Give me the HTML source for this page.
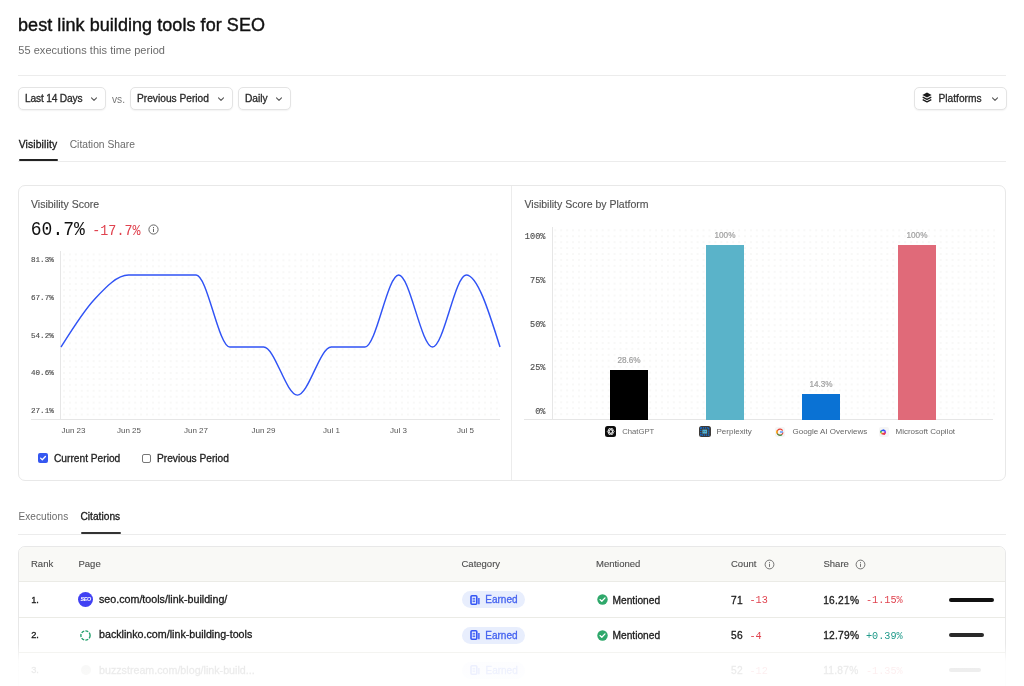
<!DOCTYPE html>
<html><head><meta charset="utf-8">
<style>
*{margin:0;padding:0;box-sizing:border-box;}
html,body{width:1024px;height:686px;overflow:hidden;background:#fff;}
body{position:relative;will-change:transform;font-family:"Liberation Sans",sans-serif;color:#1a1a1a;}
.a{position:absolute;white-space:nowrap;line-height:1;}
.mono{font-family:"Liberation Mono",monospace;}
.md{-webkit-text-stroke:0.3px currentColor;}
.btn{position:absolute;top:87px;height:23px;border:1px solid #e4e4e4;border-radius:5px;background:#fff;box-shadow:0 1px 1.5px rgba(0,0,0,0.05);}
.btn span{position:absolute;top:6.0px;font-size:10.2px;-webkit-text-stroke:0.3px currentColor;color:#2a2a2a;line-height:1;white-space:nowrap;}
.chev{position:absolute;top:8.6px;margin-left:-0.7px;}
.hl{position:absolute;height:1px;background:#ececec;}
.dots{position:absolute;background-image:radial-gradient(circle at 1px 1px,#e9e9e6 0.7px,rgba(255,255,255,0) 1px);background-size:6px 6px;}
.yl{position:absolute;font-family:"Liberation Mono",monospace;font-size:7.6px;margin-top:1.2px;color:#505050;-webkit-text-stroke:0.15px currentColor;line-height:1;white-space:nowrap;}
.xl{position:absolute;font-size:8px;color:#555;margin-top:0.2px;line-height:1;white-space:nowrap;}
.bl{position:absolute;font-size:8.2px;color:#a0a0a0;line-height:1;text-align:center;width:38px;-webkit-text-stroke:0.2px currentColor;margin-top:0.3px;}
.th{position:absolute;top:559.0px;font-size:9.5px;color:#4e4e4e;-webkit-text-stroke:0.12px currentColor;line-height:1;white-space:nowrap;}
.cell{position:absolute;font-size:9.8px;line-height:1;color:#1a1a1a;white-space:nowrap;}
.pill{position:absolute;left:462px;width:63px;height:17px;border-radius:9px;background:#e8eefd;}
</style></head><body>

<!-- Title -->
<div class="a" style="left:18px;top:16.3px;font-size:18px;color:#111;letter-spacing:0.06px;-webkit-text-stroke:0.4px currentColor;">best link building tools for SEO</div>
<div class="a" style="left:18.3px;top:44.7px;font-size:11px;color:#6b6b6b;letter-spacing:0.04px;">55 executions this time period</div>
<div class="hl" style="left:18px;top:75px;width:988px;"></div>

<!-- Filter buttons -->
<svg width="0" height="0" style="position:absolute"><defs><path id="chv" d="M0.5 0.8L3 3.3 5.5 0.8" fill="none" stroke="#555" stroke-width="1.1" stroke-linecap="round" stroke-linejoin="round"/></defs></svg>
<div class="btn" style="left:18px;width:88px;"><span style="left:6px;letter-spacing:-0.18px;">Last 14 Days</span><svg class="chev" style="left:72.8px" width="6" height="5"><use href="#chv"/></svg></div>
<div class="a" style="left:112px;top:94.6px;font-size:10.2px;color:#777;">vs.</div>
<div class="btn" style="left:130px;width:103px;"><span style="left:6px;">Previous Period</span><svg class="chev" style="left:87.5px" width="6" height="5"><use href="#chv"/></svg></div>
<div class="btn" style="left:238px;width:53px;"><span style="left:6px;">Daily</span><svg class="chev" style="left:38px" width="6" height="5"><use href="#chv"/></svg></div>
<div class="btn" style="left:914px;width:93px;"><span style="left:23.5px;">Platforms</span><svg class="chev" style="left:77.5px" width="6" height="5"><use href="#chv"/></svg>
  <svg style="position:absolute;left:6.5px;top:4.2px" width="10" height="11" viewBox="0 0 10 11" preserveAspectRatio="none" style=""><path d="M5 0.4L9.6 2.9 5 5.4 0.4 2.9z" fill="#1a1a1a"/><path d="M0.7 5.1L5 7.4 9.3 5.1" fill="none" stroke="#1a1a1a" stroke-width="1.25" stroke-linejoin="round"/><path d="M0.7 7.6L5 9.9 9.3 7.6" fill="none" stroke="#1a1a1a" stroke-width="1.25" stroke-linejoin="round"/></svg>
</div>

<!-- Tabs -->
<div class="a md" style="left:18.7px;top:139.8px;font-size:10.4px;letter-spacing:0.12px;color:#1a1a1a;">Visibility</div>
<div class="a" style="left:69.7px;top:140.0px;font-size:10.3px;color:#6b6b6b;">Citation Share</div>
<div class="hl" style="left:18px;top:161px;width:988px;"></div>
<div class="a" style="left:18.7px;top:159.2px;width:39.3px;height:2px;border-radius:1px;background:#222;"></div>

<!-- Cards -->
<div class="a" style="left:18px;top:185px;width:988px;height:296.2px;border:1px solid #e8e8e8;border-radius:7px;"></div>
<div class="a" style="left:511px;top:186px;width:1px;height:294px;background:#ececec;"></div>

<!-- Left card -->
<div class="a" style="left:31px;top:198.6px;font-size:10.5px;color:#505050;-webkit-text-stroke:0.12px currentColor;">Visibility Score</div>
<div class="a mono" style="left:30.8px;top:221.4px;font-size:18px;color:#111;transform:scaleY(1.1);transform-origin:0 13.8px;">60.7%</div>
<div class="a mono" style="left:92.3px;top:224.6px;font-size:13.4px;color:#e0434f;transform:scaleY(1.07);transform-origin:0 10.3px;">-17.7%</div>
<svg class="a" style="left:148.3px;top:223.9px" width="11" height="11" viewBox="0 0 11 11"><circle cx="5.5" cy="5.5" r="4.6" fill="none" stroke="#666" stroke-width="1"/><rect x="5" y="4.7" width="1" height="3.3" fill="#666"/><rect x="5" y="3" width="1" height="1" fill="#666"/></svg>

<svg class="a" style="left:0;top:0" width="1024" height="686"><defs><pattern id="pl" patternUnits="userSpaceOnUse" x="61.03" y="251.43" width="5.93" height="5.93"><circle cx="2.97" cy="2.97" r="0.7" fill="#ebebe9"/></pattern><pattern id="pr" patternUnits="userSpaceOnUse" x="552.3" y="227.33" width="5.93" height="5.93"><circle cx="2.97" cy="2.97" r="0.7" fill="#ebebe9"/></pattern></defs><rect x="61" y="251" width="440" height="167" fill="url(#pl)"/><rect x="553" y="227" width="442" height="191" fill="url(#pr)"/></svg>
<div class="a" style="left:60px;top:251px;width:1px;height:169px;background:#e6e6e6;"></div>
<div class="a" style="left:31px;top:419px;width:469px;height:1px;background:#e6e6e6;"></div>
<div class="yl" style="left:31px;top:256px;">81.3%</div>
<div class="yl" style="left:31px;top:293.5px;">67.7%</div>
<div class="yl" style="left:31px;top:331.5px;">54.2%</div>
<div class="yl" style="left:31px;top:369px;">40.6%</div>
<div class="yl" style="left:31px;top:406.5px;">27.1%</div>
<div class="xl" style="left:61.5px;top:427px;">Jun 23</div>
<div class="xl" style="left:117px;top:427px;">Jun 25</div>
<div class="xl" style="left:184px;top:427px;">Jun 27</div>
<div class="xl" style="left:251.5px;top:427px;">Jun 29</div>
<div class="xl" style="left:323px;top:427px;">Jul 1</div>
<div class="xl" style="left:390px;top:427px;">Jul 3</div>
<div class="xl" style="left:457px;top:427px;">Jul 5</div>

<svg class="a" style="left:0;top:0" width="1024" height="686" viewBox="0 0 1024 686">
  <path d="M61.0 347.0 C72.3 329.0 83.5 310.9 94.8 298.9 C106.0 286.9 117.3 275.0 128.5 275.0 C139.8 275.0 151.1 275.0 162.3 275.0 C173.6 275.0 184.8 275.0 196.1 275.0 C207.3 275.0 218.6 347.0 229.8 347.0 C241.1 347.0 252.4 347.0 263.6 347.0 C274.9 347.0 286.1 395.1 297.4 395.1 C308.6 395.1 319.9 347.0 331.2 347.0 C342.4 347.0 353.7 347.0 364.9 347.0 C376.2 347.0 387.4 275.0 398.7 275.0 C409.9 275.0 421.2 347.0 432.5 347.0 C443.7 347.0 455.0 275.0 466.2 275.0 C477.5 275.0 488.7 311.0 500.0 347.0" fill="none" stroke="#3053f5" stroke-width="1.45"/>
</svg>

<div class="a" style="left:38px;top:453px;width:10px;height:10px;border-radius:2px;background:#3557f0;"></div>
<svg class="a" style="left:38px;top:453px" width="10" height="10" viewBox="0 0 10 10"><path d="M2.6 5.1L4.3 6.7 7.4 3.5" fill="none" stroke="#fff" stroke-width="1.3" stroke-linecap="round" stroke-linejoin="round"/></svg>
<div class="a md" style="left:54px;top:454.4px;font-size:10.2px;color:#222;">Current Period</div>
<div class="a" style="left:142px;top:453.5px;width:9px;height:9.5px;border:1px solid #777;border-radius:2px;"></div>
<div class="a md" style="left:157px;top:454.4px;font-size:10.2px;color:#222;">Previous Period</div>

<!-- Right card -->
<div class="a" style="left:524.5px;top:198.6px;font-size:10.5px;color:#505050;-webkit-text-stroke:0.12px currentColor;">Visibility Score by Platform</div>

<div class="a" style="left:552px;top:227px;width:1px;height:193px;background:#e6e6e6;"></div>
<div class="a" style="left:524px;top:419px;width:469px;height:1px;background:#e6e6e6;"></div>
<div class="yl" style="left:518px;top:232px;width:27.5px;text-align:right;font-size:8.6px;">100%</div>
<div class="yl" style="left:518px;top:276px;width:27.5px;text-align:right;font-size:8.6px;">75%</div>
<div class="yl" style="left:518px;top:319.5px;width:27.5px;text-align:right;font-size:8.6px;">50%</div>
<div class="yl" style="left:518px;top:363px;width:27.5px;text-align:right;font-size:8.6px;">25%</div>
<div class="yl" style="left:518px;top:406.5px;width:27.5px;text-align:right;font-size:8.6px;">0%</div>

<div class="a" style="left:610px;top:369.5px;width:38.2px;height:50px;background:#000;"></div>
<div class="a" style="left:706px;top:245px;width:38.2px;height:174.5px;background:#5ab3c9;"></div>
<div class="a" style="left:802px;top:394px;width:38.2px;height:25.5px;background:#0a72d4;"></div>
<div class="a" style="left:898px;top:245px;width:38.2px;height:174.5px;background:#e06a79;"></div>
<div class="bl" style="left:610px;top:356.5px;">28.6%</div>
<div class="bl" style="left:706px;top:231.5px;">100%</div>
<div class="bl" style="left:802px;top:380.5px;">14.3%</div>
<div class="bl" style="left:898px;top:231.5px;">100%</div>

<div class="a" style="left:604.5px;top:426px;width:11.5px;height:11px;border-radius:2.5px;background:#0d0d0d;"></div>
<svg class="a" style="left:604.5px;top:426px" width="11.5" height="11" viewBox="0 0 11.5 11"><g fill="none" stroke="#eee" stroke-width="0.8"><ellipse cx="5.75" cy="5.5" rx="3.4" ry="1.6"/><ellipse cx="5.75" cy="5.5" rx="3.4" ry="1.6" transform="rotate(60 5.75 5.5)"/><ellipse cx="5.75" cy="5.5" rx="3.4" ry="1.6" transform="rotate(120 5.75 5.5)"/></g></svg>
<div class="xl" style="left:622.2px;top:427.5px;color:#6a6a6a;font-size:7.7px;">ChatGPT</div>
<div class="a" style="left:699px;top:426px;width:11.5px;height:11px;border-radius:2.5px;background:#3d3a38;"></div>
<svg class="a" style="left:699px;top:426px" width="11.5" height="11" viewBox="0 0 11.5 11"><rect x="1.8" y="1.8" width="7.9" height="7.4" fill="none" stroke="#0a74e8" stroke-width="1.2" stroke-dasharray="1.3 0.8"/><rect x="3.4" y="3.6" width="4.7" height="4" fill="#4fb4d8"/><circle cx="4.9" cy="5.6" r="0.5" fill="#555"/><circle cx="6.7" cy="5.6" r="0.5" fill="#555"/></svg>
<div class="xl" style="left:716.5px;top:427.5px;color:#666;">Perplexity</div>
<div class="a" style="left:775px;top:426.5px;width:10px;height:10px;border-radius:2px;background:#f5f5f5;"></div>
<svg class="a" style="left:776px;top:427.5px" width="8" height="8" viewBox="0 0 8 8"><path d="M6.6 2.6A3 3 0 1 0 7 4.5" fill="none" stroke="#ea4335" stroke-width="1.2"/><path d="M1.3 5.5A3 3 0 0 0 6 6.6" fill="none" stroke="#34a853" stroke-width="1.2"/><path d="M1.1 2.6A3 3 0 0 0 1.3 5.5" fill="none" stroke="#fbbc05" stroke-width="1.2"/><path d="M4 4H7" stroke="#4285f4" stroke-width="1.2"/></svg>
<div class="xl" style="left:792.5px;top:427.5px;color:#666;">Google AI Overviews</div>
<div class="a" style="left:878.5px;top:426.5px;width:10px;height:10px;border-radius:2px;background:#f5f5f5;"></div>
<svg class="a" style="left:879px;top:427.5px" width="8" height="8" viewBox="0 0 8 8"><path d="M1.6 2.2L4.8 1.2 7 3 4 4z" fill="#2a55f0"/><path d="M7 3L7 5.2 4 4z" fill="#8a3cf0"/><path d="M1.2 2.4L4 4 1.2 5z" fill="#1faa55"/><path d="M1.2 5L4 4 2.6 6z" fill="#f0b400"/><path d="M2.4 6.2L4 4 7 5 5.6 7z" fill="#e8384a"/><circle cx="4" cy="4" r="0.9" fill="#fff"/></svg>
<div class="xl" style="left:895.5px;top:427.5px;color:#666;">Microsoft Copilot</div>

<!-- Bottom tabs -->
<div class="a" style="left:18.5px;top:511.5px;font-size:10px;color:#6b6b6b;letter-spacing:0.08px;">Executions</div>
<div class="a md" style="left:80.5px;top:512.4px;font-size:10.2px;color:#1a1a1a;">Citations</div>
<div class="hl" style="left:18px;top:533.5px;width:988px;"></div>
<div class="a" style="left:80.5px;top:532.2px;width:40.5px;height:2px;border-radius:1px;background:#333;"></div>

<!-- Table -->
<div class="a" style="left:18px;top:546px;width:988px;height:160px;border:1px solid #e8e8e8;border-radius:7px;overflow:hidden;">
  <div style="position:absolute;left:0;top:0;width:100%;height:35px;background:#f9f9f6;border-bottom:1px solid #ebebe6;"></div>
  <div style="position:absolute;left:0;top:69.6px;width:100%;height:1px;background:#ebebe6;"></div>
  <div style="position:absolute;left:0;top:104.8px;width:100%;height:1px;background:#ebebe6;"></div>
</div>
<div class="th" style="left:31px;">Rank</div>
<div class="th" style="left:78.5px;">Page</div>
<div class="th" style="left:461.5px;">Category</div>
<div class="th" style="left:596px;">Mentioned</div>
<div class="th" style="left:731px;">Count</div>
<svg class="a" style="left:763.5px;top:559px" width="11" height="11" viewBox="0 0 11 11"><circle cx="5.5" cy="5.5" r="4.4" fill="none" stroke="#666" stroke-width="0.9"/><rect x="5.05" y="4.7" width="0.9" height="3.2" fill="#666"/><rect x="5.05" y="3.1" width="0.9" height="0.9" fill="#666"/></svg>
<div class="th" style="left:823.5px;">Share</div>
<svg class="a" style="left:855px;top:559px" width="11" height="11" viewBox="0 0 11 11"><circle cx="5.5" cy="5.5" r="4.4" fill="none" stroke="#666" stroke-width="0.9"/><rect x="5.05" y="4.7" width="0.9" height="3.2" fill="#666"/><rect x="5.05" y="3.1" width="0.9" height="0.9" fill="#666"/></svg>

<!-- Row 1 -->
<div class="cell md" style="left:31.2px;top:595.6px;font-size:9.3px;">1.</div>
<div class="a" style="left:78.2px;top:592.2px;width:15.2px;height:15.2px;border-radius:50%;background:#4141f3;"></div>
<div class="a" style="left:78.2px;top:597.1px;width:15.2px;text-align:center;font-size:5.4px;font-weight:bold;font-style:italic;color:#fff;letter-spacing:-0.3px;">SEO</div>
<div class="cell md" style="left:99px;top:594.2px;font-size:10.7px;">seo.com/tools/link-building/</div>
<div class="pill" style="top:591px;"></div>
<svg class="a" style="left:470px;top:594.5px" width="10" height="10" viewBox="0 0 10 10"><rect x="1" y="0.8" width="5.8" height="8.4" rx="1" fill="none" stroke="#3456f4" stroke-width="1.6"/><path d="M2.6 3.4H5.2M2.6 5H5.2M2.6 6.6H5.2" stroke="#3456f4" stroke-width="0.9"/><path d="M8.9 3V9.2" stroke="#3456f4" stroke-width="1.4"/></svg>
<div class="cell md" style="left:485.3px;top:595.0px;font-size:10px;color:#4563f0;">Earned</div>
<svg class="a" style="left:596.5px;top:593.8px" width="11" height="11" viewBox="0 0 11 11"><circle cx="5.5" cy="5.5" r="5.2" fill="#2fa86b"/><path d="M3 5.6L4.8 7.2 8 3.9" fill="none" stroke="#fff" stroke-width="1.3" stroke-linecap="round" stroke-linejoin="round"/></svg>
<div class="cell md" style="left:612.5px;top:595.6px;font-size:10.2px;">Mentioned</div>
<div class="cell md" style="left:731px;top:596.1px;font-size:10.2px;letter-spacing:0.25px;">71</div>
<div class="cell mono" style="left:749.5px;top:596px;font-size:10.2px;transform:scaleY(1.1);transform-origin:0 8px;color:#e0434f;">-13</div>
<div class="cell md" style="left:823.2px;top:596.1px;font-size:10.2px;letter-spacing:0.25px;">16.21%</div>
<div class="cell mono" style="left:866px;top:596px;font-size:10.2px;transform:scaleY(1.1);transform-origin:0 8px;color:#e0434f;">-1.15%</div>
<div class="a" style="left:948.5px;top:597.7px;width:45px;height:4px;border-radius:2px;background:#111;"></div>

<!-- Row 2 -->
<div class="cell md" style="left:31.2px;top:631.2px;font-size:9.3px;">2.</div>
<svg class="a" style="left:80.2px;top:629.7px" width="11" height="11" viewBox="0 0 11 11"><circle cx="5.5" cy="5.5" r="4.6" fill="none" stroke="#22a06b" stroke-width="1.4" stroke-dasharray="3 1.2"/></svg>
<div class="cell md" style="left:99px;top:629.4px;font-size:10.7px;">backlinko.com/link-building-tools</div>
<div class="pill" style="top:626.5px;"></div>
<svg class="a" style="left:470px;top:630px" width="10" height="10" viewBox="0 0 10 10"><rect x="1" y="0.8" width="5.8" height="8.4" rx="1" fill="none" stroke="#3456f4" stroke-width="1.6"/><path d="M2.6 3.4H5.2M2.6 5H5.2M2.6 6.6H5.2" stroke="#3456f4" stroke-width="0.9"/><path d="M8.9 3V9.2" stroke="#3456f4" stroke-width="1.4"/></svg>
<div class="cell md" style="left:485.3px;top:630.6px;font-size:10px;color:#4563f0;">Earned</div>
<svg class="a" style="left:596.5px;top:629.8px" width="11" height="11" viewBox="0 0 11 11"><circle cx="5.5" cy="5.5" r="5.2" fill="#2fa86b"/><path d="M3 5.6L4.8 7.2 8 3.9" fill="none" stroke="#fff" stroke-width="1.3" stroke-linecap="round" stroke-linejoin="round"/></svg>
<div class="cell md" style="left:612.5px;top:631.2px;font-size:10.2px;">Mentioned</div>
<div class="cell md" style="left:731px;top:631.4px;font-size:10.2px;letter-spacing:0.25px;">56</div>
<div class="cell mono" style="left:749.5px;top:631.5px;font-size:10.2px;transform:scaleY(1.1);transform-origin:0 8px;color:#e0434f;">-4</div>
<div class="cell md" style="left:823.2px;top:631.4px;font-size:10.2px;letter-spacing:0.25px;">12.79%</div>
<div class="cell mono" style="left:866px;top:631.5px;font-size:10.2px;transform:scaleY(1.1);transform-origin:0 8px;color:#1f9a8a;">+0.39%</div>
<div class="a" style="left:948.5px;top:633px;width:35px;height:4px;border-radius:2px;background:#2a2a2a;"></div>

<!-- Row 3 -->
<div class="cell md" style="left:31.2px;top:666.4px;font-size:9.3px;">3.</div>
<div class="a" style="left:81px;top:664.5px;width:10px;height:10px;border-radius:50%;background:#b8b8b0;"></div>
<div class="cell md" style="left:99px;top:664.6px;font-size:10.7px;">buzzstream.com/blog/link-build...</div>
<div class="pill" style="top:661.5px;"></div>
<svg class="a" style="left:470px;top:665px" width="10" height="10" viewBox="0 0 10 10"><rect x="1" y="0.8" width="5.8" height="8.4" rx="1" fill="none" stroke="#3456f4" stroke-width="1.6"/><path d="M2.6 3.4H5.2M2.6 5H5.2M2.6 6.6H5.2" stroke="#3456f4" stroke-width="0.9"/><path d="M8.9 3V9.2" stroke="#3456f4" stroke-width="1.4"/></svg>
<div class="cell md" style="left:485.5px;top:666px;font-size:10px;color:#4563f0;">Earned</div>
<div class="cell md" style="left:731px;top:665.9px;font-size:10.2px;letter-spacing:0.25px;">52</div>
<div class="cell mono" style="left:749.5px;top:666.5px;font-size:10.2px;transform:scaleY(1.1);transform-origin:0 8px;color:#e0434f;">-12</div>
<div class="cell md" style="left:823.2px;top:665.9px;font-size:10.2px;letter-spacing:0.25px;">11.87%</div>
<div class="cell mono" style="left:866px;top:666.5px;font-size:10.2px;transform:scaleY(1.1);transform-origin:0 8px;color:#e0434f;">-1.35%</div>
<div class="a" style="left:948.5px;top:668px;width:32px;height:4px;border-radius:2px;background:#444;"></div>

<!-- fade -->
<div class="a" style="left:0;top:644px;width:1024px;height:42px;background:linear-gradient(to bottom,rgba(255,255,255,0) 0px,rgba(255,255,255,0.9) 17px,rgba(255,255,255,0.92) 42px);"></div>

</body></html>
